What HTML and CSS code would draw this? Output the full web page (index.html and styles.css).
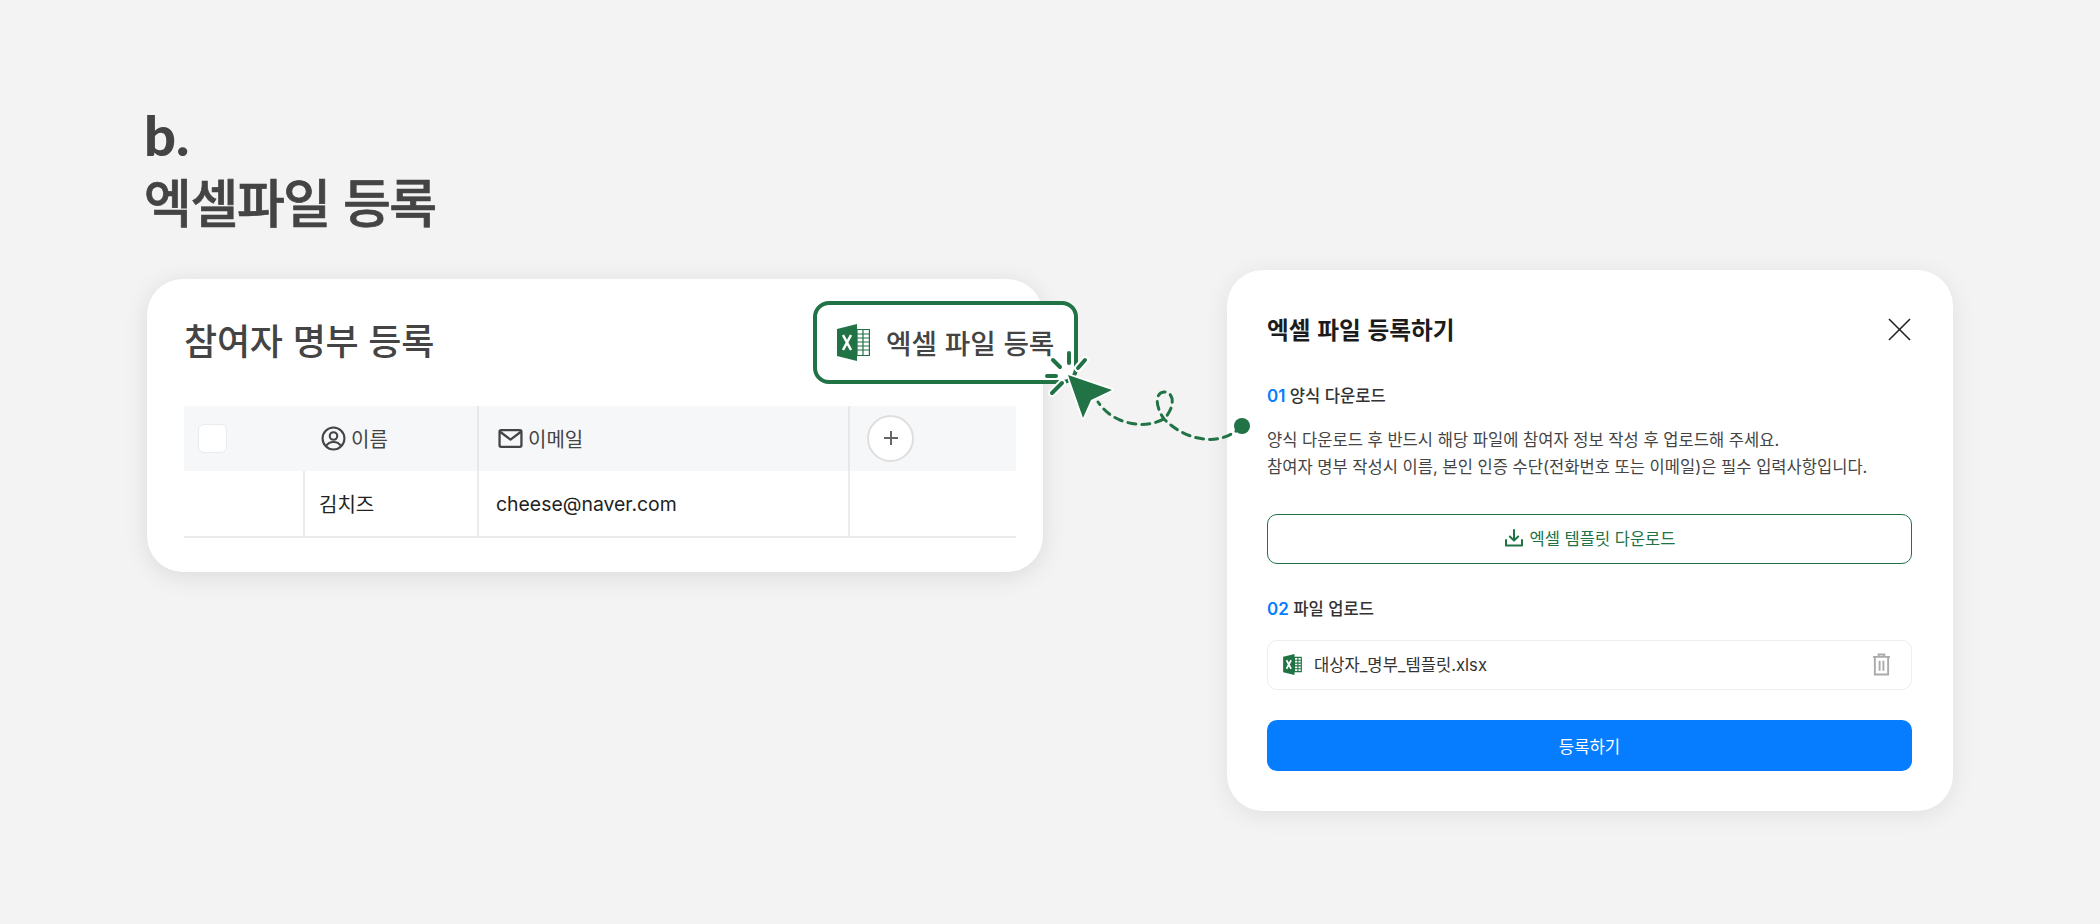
FILE: index.html
```html
<!DOCTYPE html>
<html lang="ko">
<head>
<meta charset="utf-8">
<title>엑셀파일 등록</title>
<link rel="stylesheet" href="styles.css">
</head>
<body>
<main class="page">
  <header class="intro">
    <div class="intro-mark">b.</div>
    <h1 class="intro-title">엑셀파일 등록</h1>
  </header>
  <div class="stage">
    <section class="list-card">
      <h2 class="list-title">참여자 명부 등록</h2>
      <div class="table">
        <div class="cell head head-check"><span class="checkbox"></span></div>
        <div class="cell head head-name">
          <svg class="head-icon" viewBox="0 0 24 24" fill="none" stroke="#444" stroke-width="2"><circle cx="12" cy="12" r="10.5"/><circle cx="12" cy="9.6" r="3.6"/><path d="M5 19c1.600-2.600 4-3.700 7-3.700s5.400 1.100 7 3.700"/></svg>
          <span>이름</span>
        </div>
        <div class="cell head head-mail">
          <svg class="head-icon" viewBox="0 0 24 24" fill="none" stroke="#444" stroke-width="2.200" stroke-linejoin="round"><rect x="1.500" y="4" width="21" height="16" rx="1.500"/><path d="M2 5.500l10 7.500 10-7.500"/></svg>
          <span>이메일</span>
        </div>
        <div class="cell head head-add">
          <span class="add-btn"><svg viewBox="0 0 20 20" width="20" height="20" stroke="#666" stroke-width="2"><path d="M10 3v14M3 10h14"/></svg></span>
        </div>
        <div class="cell body-cell body-empty"></div>
        <div class="cell body-cell body-name">김치즈</div>
        <div class="cell body-cell body-mail">cheese@naver.com</div>
        <div class="cell body-cell body-last"></div>
      </div>
    </section>

    <section class="modal">
      <div class="modal-head">
        <h2 class="modal-title">엑셀 파일 등록하기</h2>
        <svg class="close" viewBox="0 0 24 24" fill="none" stroke="#222" stroke-width="1.600"><path d="M1 1l22 22M23 1L1 23"/></svg>
      </div>
      <h3 class="step step-one"><b>01</b> 양식 다운로드</h3>
      <p class="desc">양식 다운로드 후 반드시 해당 파일에 참여자 정보 작성 후 업로드해 주세요.<br>참여자 명부 작성시 이름, 본인 인증 수단(전화번호 또는 이메일)은 필수 입력사항입니다.</p>
      <div class="download">
        <svg viewBox="0 0 20 20" width="20" height="20" fill="none" stroke="#217346" stroke-width="2" stroke-linecap="round" stroke-linejoin="round"><path d="M10 2v10M5.800 8.500L10 12.500l4.200-4M2 12v5.500h16V12"/></svg>
        <span>엑셀 템플릿 다운로드</span>
      </div>
      <h3 class="step step-two"><b>02</b> 파일 업로드</h3>
      <div class="file">
        <svg class="file-icon" viewBox="0 0 33 37"><path fill="#217346" d="M0 5l20-5v37L0 32z"/><path fill="#fff" stroke="#217346" stroke-width="2" d="M20 6h12v25H20z"/><path stroke="#217346" stroke-width="2" d="M20 11h12M20 16h12M20 21h12M20 26h12M26 6v25"/><path stroke="#fff" stroke-width="3" d="M6 11l8 15M14 11L6 26"/></svg>
        <span class="file-name">대상자_명부_템플릿.xlsx</span>
        <svg class="trash" viewBox="0 0 20 24" fill="none" stroke="#aaa" stroke-width="2"><path d="M1 4h18M7 4V1.500h6V4M3 4v18.500h14V4M8 8v10.500M12 8v10.500"/></svg>
      </div>
      <div class="submit">등록하기</div>
    </section>
  </div>

  <div class="excel-btn">
    <svg class="excel-icon" viewBox="0 0 33 37"><path fill="#217346" d="M0 5l20-5v37L0 32z"/><path fill="#fff" stroke="#217346" stroke-width="1.200" d="M20 5.500h12.400v26H20z"/><path stroke="#217346" stroke-width="1.200" d="M20 10h12M20 14h12M20 18h12M20 22h12M20 26h12M26 6v25"/><path stroke="#fff" stroke-width="2.600" d="M6 11l8 15M14 11L6 26"/></svg>
    <span>엑셀 파일 등록</span>
  </div>

  <svg class="pointer" viewBox="0 0 2100 924" width="2100" height="924" fill="none">
    <path class="trail" d="M1242 426C1232 436 1218 441 1205 439C1190 438 1175 430 1164 419C1156 408 1154 393 1164 392C1175 392 1175 408 1164 419C1150 426 1135 426 1120 420C1110 416 1103 409 1098 402"/>
    <circle cx="1242" cy="426" r="8" fill="#217346"/>
    <path class="spark-under" d="M1069 353v10M1085 360l-7 8M1053 360l7 7M1047 376h9M1052 393l10-10"/>
    <path class="spark" d="M1069 353v10M1085 360l-7 8M1053 360l7 7M1047 376h9M1052 393l10-10"/>
    <path class="arrow" d="M1068 375l44 15-21 10-8 18z"/>
  </svg>
</main>
</body>
</html>
```

FILE: styles.css
```css
* { box-sizing: border-box; }
html, body { margin: 0; padding: 0; }
body {
  background: #f3f3f3;
  color: #444;
  font-family: Inter, "Noto Sans CJK KR", sans-serif;
}
h1, h2, h3, p { margin: 0; }

.page {
  position: relative;
  width: 2100px;
  height: 924px;
  padding-top: 103px;
  overflow: hidden;
}

.intro { margin-left: 144px; height: 168px; }
.intro-mark {
  font-family: Lato, Inter, sans-serif;
  font-size: 56px;
  font-weight: 900;
  line-height: 64px;
}
.intro-title {
  font-family: "Noto Sans CJK KR", sans-serif;
  font-size: 52px;
  font-weight: 500;
  line-height: 68px;
  letter-spacing: -1.400px;
  -webkit-text-stroke: .7px #444;
}

.stage { display: flex; align-items: flex-start; }

.list-card {
  margin: 8px 0 0 147px;
  width: 896px;
  height: 293px;
  padding: 35px 27px 0 37px;
  background: #fff;
  border-radius: 36px;
  box-shadow: 0 4px 24px rgba(0, 0, 0, .1);
}
.list-title {
  font-family: "Noto Sans CJK KR", sans-serif;
  font-size: 36px;
  font-weight: 500;
  line-height: 50px;
  letter-spacing: -.2px;
}

.table {
  margin-top: 42px;
  display: grid;
  grid-template-columns: 119px 174px 371px 168px;
  grid-template-rows: 65px 65px;
  border-bottom: 2px solid #eaebed;
}
.cell { display: flex; align-items: center; font-size: 20px; }
.head { background: #f6f7f9; padding-bottom: 1px; }
.head-check { padding-left: 14px; }
.checkbox {
  width: 29px;
  height: 29px;
  background: #fff;
  border: 1px solid #e9ebef;
  border-radius: 6px;
}
.head-name { padding-left: 18px; gap: 5px; }
.head-mail { padding-left: 19px; gap: 5px; border-left: 2px solid #e6e8eb; }
.head-add { padding-left: 17px; border-left: 2px solid #e6e8eb; }
.head-icon { width: 25px; height: 25px; flex: none; }
.add-btn {
  display: flex;
  align-items: center;
  justify-content: center;
  width: 47px;
  height: 47px;
  background: #fff;
  border: 2px solid #dedede;
  border-radius: 50%;
}
.body-cell { color: #222; background: #fff; }
.body-name { padding-left: 14px; border-left: 2px solid #eaebed; }
.body-mail { padding-left: 17px; border-left: 2px solid #eaebed; font-size: 19.400px; }
.body-last { border-left: 2px solid #eaebed; }

.modal {
  margin-left: 184px;
  width: 726px;
  height: 541px;
  margin-top: -1px;
  padding: 36px 41px 0 40px;
  background: #fff;
  border-radius: 36px;
  box-shadow: 0 4px 24px rgba(0, 0, 0, .08);
}
.modal-head {
  display: flex;
  align-items: center;
  justify-content: space-between;
  height: 46px;
  padding-right: 1px;
}
.modal-title {
  font-family: "Noto Sans CJK KR", sans-serif;
  font-size: 23.700px;
  font-weight: 700;
  line-height: 46px;
  color: #1c1c1c;
}
.close { width: 23px; height: 23px; }

.step {
  font-size: 16.600px;
  font-weight: 500;
  line-height: 24px;
  color: #333;
}
.step b { font-weight: 600; color: #067dff; font-size: 17px; }
.step-one { margin-top: 32px; }
.desc {
  margin-top: 19px;
  font-size: 16.550px;
  line-height: 27px;
  color: #444;
}
.download {
  margin-top: 33px;
  height: 50px;
  display: flex;
  align-items: center;
  justify-content: center;
  gap: 6px;
  padding-bottom: 2px;
  border: 1.500px solid #217346;
  border-radius: 10px;
  font-size: 16.500px;
  font-weight: 400;
  color: #217346;
}
.step-two { margin-top: 33px; }
.file {
  margin-top: 19px;
  height: 50px;
  display: flex;
  align-items: center;
  padding: 0 20px 2px 15px;
  border: 1.500px solid #eee;
  border-radius: 10px;
}
.file-icon { width: 19px; height: 21px; flex: none; }
.file-name { margin-left: 12px; font-size: 16.600px; color: #333; flex: 1; }
.trash { width: 19px; height: 23px; flex: none; }
.submit {
  margin-top: 30px;
  height: 51px;
  display: flex;
  align-items: center;
  justify-content: center;
  background: #067dff;
  border-radius: 10px;
  font-size: 16.700px;
  font-weight: 400;
  color: #fff;
}

.excel-btn {
  position: absolute;
  left: 813px;
  top: 301px;
  width: 265px;
  height: 83px;
  display: flex;
  align-items: center;
  padding: 0 0 2px 20px;
  gap: 16px;
  background: #fff;
  border: 4px solid #217346;
  border-radius: 16px;
  font-family: "Noto Sans CJK KR", sans-serif;
  font-size: 27.700px;
  font-weight: 500;
}
.excel-icon { width: 33px; height: 37px; flex: none; margin-top: 2px; }

.pointer { position: absolute; left: 0; top: 0; pointer-events: none; }
.trail {
  stroke: #217346;
  stroke-width: 3px;
  stroke-dasharray: 8 6;
  stroke-linecap: round;
}
.spark { stroke: #217346; stroke-width: 4px; stroke-linecap: round; }
.spark-under { stroke: #fff; stroke-width: 8px; stroke-linecap: round; }
.arrow { fill: #217346; stroke: #fff; stroke-width: 3.500px; stroke-linejoin: round; paint-order: stroke; }
```
